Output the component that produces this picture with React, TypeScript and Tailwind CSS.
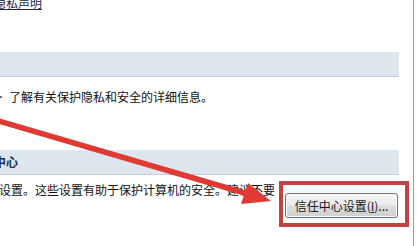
import React from "react";

export default function App() {
  return (
    <div className="relative w-[420px] h-[246px] overflow-hidden bg-white font-['Noto_Sans_CJK_SC','Microsoft_YaHei',sans-serif] text-[12px] text-[#111]">
      <div className="flex h-full">
        <div className="w-[414px] h-full border-r border-[#9a9a9a] pr-[14px]">
          <div className="h-[10px] -mt-[5px] -ml-[6px] leading-[15px]">
            <span className="underline text-[#1c2a44] decoration-[#1c2a44]">隐私声明</span>
          </div>
          <div className="mt-[47px] h-[25px] bg-[#dde6ef] border-b border-[#c3cdd8]" />
          <div className="mt-[12px] h-[16px] leading-[16px] flex items-center whitespace-nowrap">
            <span className="-ml-[3px] mr-[6px] inline-block w-[6px] h-[4px] bg-[#333] [clip-path:polygon(0_0,100%_50%,0_100%)]" />
            <span>了解有关保护隐私和安全的详细信息。</span>
          </div>
          <div className="mt-[45px] h-[25px] bg-[#dde6ef] border-b border-[#c3cdd8] flex items-center">
            <span className="-ml-[30px] font-bold text-[#1b2e4b] whitespace-nowrap">信任中心</span>
          </div>
          <div className="mt-[7px] flex items-start">
            <span className="-ml-[1px] leading-[16px] whitespace-nowrap">设置。这些设置有助于保护计算机的安全。建议不要</span>
            <button className="ml-auto mr-[1px] mt-[11px] w-[113px] h-[25px] rounded-[3px] border border-[#707070] bg-[linear-gradient(to_bottom,#f4f4f4_0%,#ebebeb_48%,#dddddd_52%,#cfcfcf_100%)] shadow-[inset_0_0_0_1px_#fcfcfc] text-[12px] leading-[23px] text-[#1a1a1a] whitespace-nowrap flex-none">
              信任中心设置(<span className="underline">I</span>)...
            </button>
          </div>
        </div>
      </div>
      <div className="absolute left-[279px] top-[181px] w-[130px] h-[46px] border-[4px] border-[#c2423f]" />
      <svg className="absolute left-0 top-0 pointer-events-none" width="420" height="246" viewBox="0 0 420 246">
        <line x1="-10" y1="118.5" x2="248" y2="194" stroke="#e03a34" strokeWidth="5.5" strokeLinecap="butt" />
        <polygon points="271,201 241,204 248,183" fill="#e03a34" />
      </svg>
    </div>
  );
}
